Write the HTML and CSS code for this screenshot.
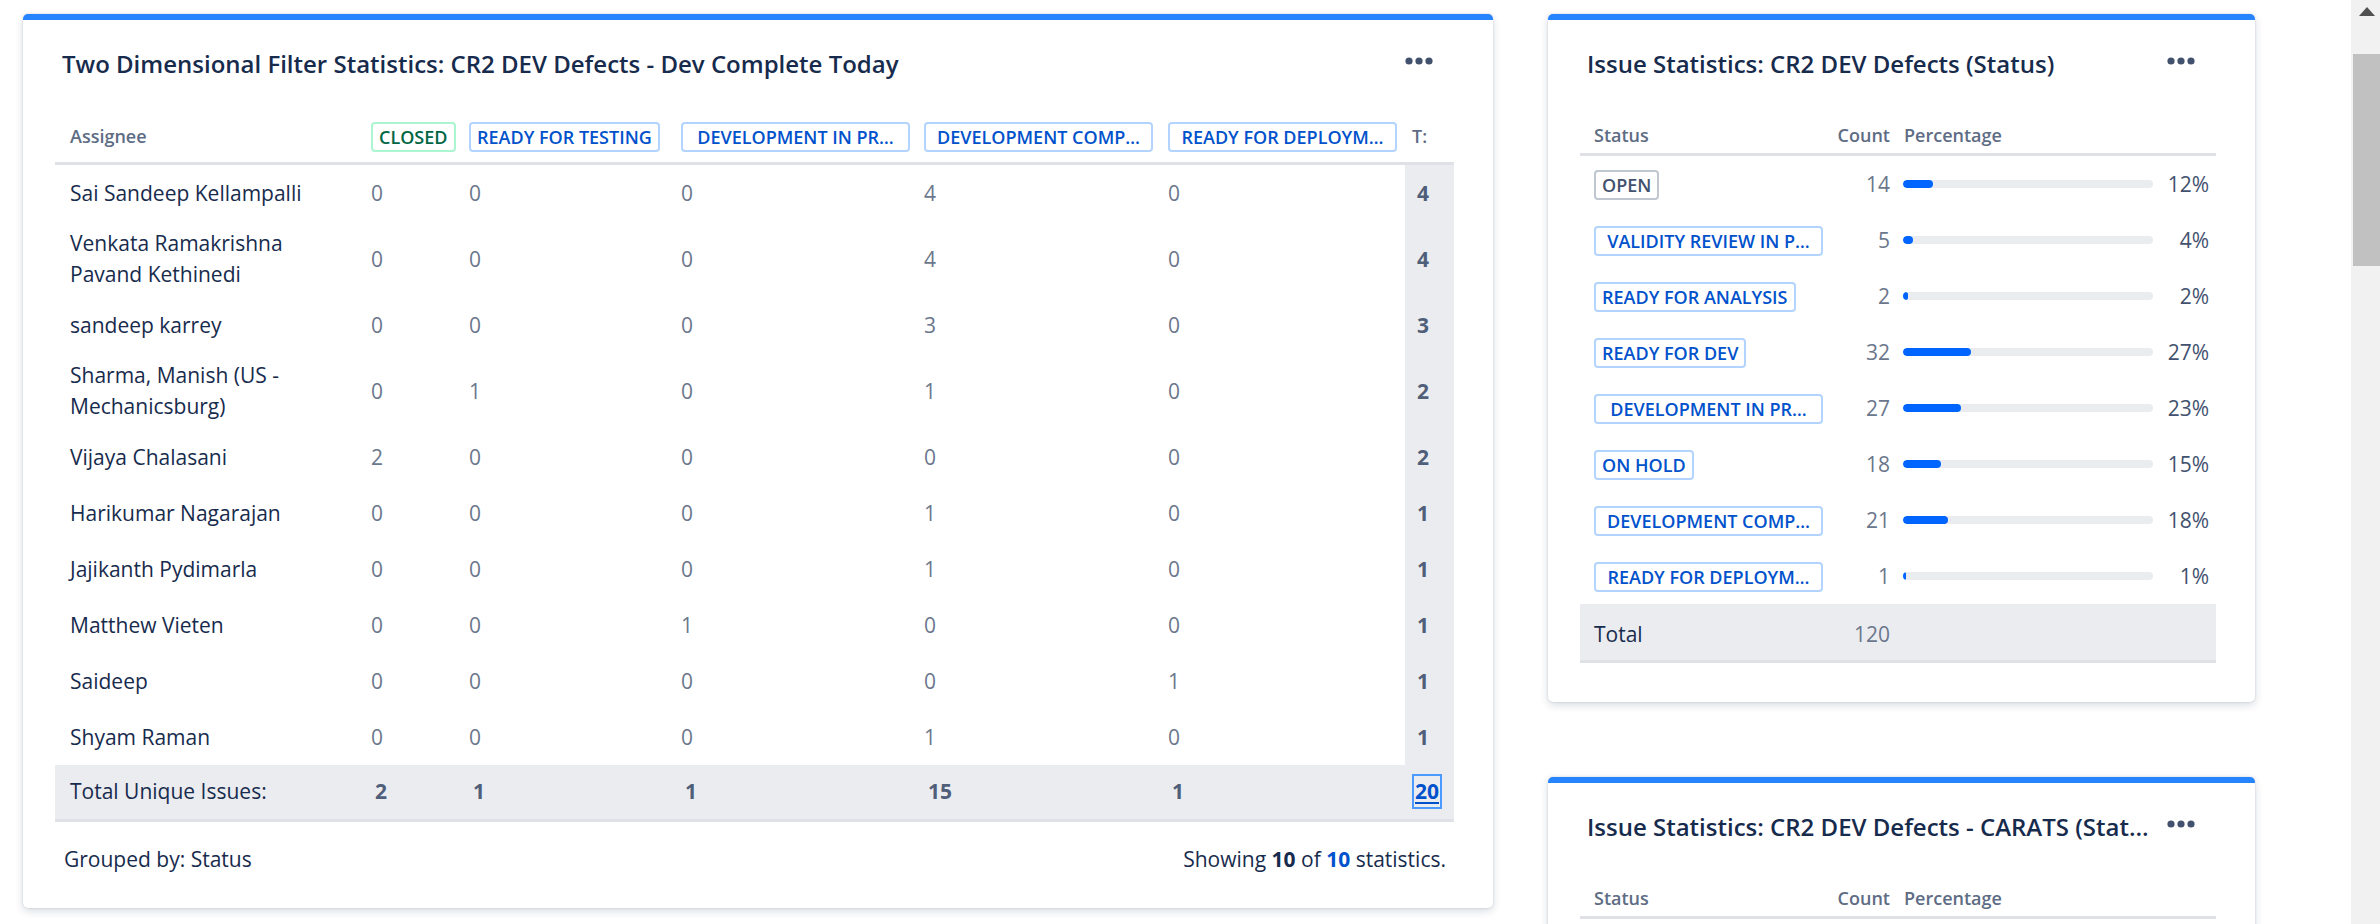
FILE: index.html
```html
<!DOCTYPE html>
<html lang="en">
<head>
<meta charset="utf-8">
<title>Dashboard</title>
<link rel="stylesheet" href="styles.css">
</head>
<body>
<div class="page">
  <div class="dashboard">
    <div class="col-left">
      <section class="gadget">
        <header class="gadget-head">
          <h2 class="gadget-title">Two Dimensional Filter Statistics: CR2 DEV Defects - Dev Complete Today</h2>
          <svg class="dots" width="28" height="8" viewBox="0 0 28 8"><circle cx="4" cy="4" r="3.6"/><circle cx="14" cy="4" r="3.6"/><circle cx="24" cy="4" r="3.6"/></svg>
        </header>
        <table class="two-d">
          <colgroup>
            <col class="w-assignee"><col class="w-c1"><col class="w-c2"><col class="w-c3"><col class="w-c4"><col class="w-c5"><col class="w-tot">
          </colgroup>
          <thead>
            <tr>
              <th class="first">Assignee</th>
              <th><span class="loz loz-green">CLOSED</span></th>
              <th><span class="loz loz-blue">READY FOR TESTING</span></th>
              <th><span class="loz loz-blue loz-trunc" title="DEVELOPMENT IN PROGRESS">DEVELOPMENT IN PR…</span></th>
              <th><span class="loz loz-blue loz-trunc" title="DEVELOPMENT COMPLETE">DEVELOPMENT COMP…</span></th>
              <th><span class="loz loz-blue loz-trunc" title="READY FOR DEPLOYMENT">READY FOR DEPLOYM…</span></th>
              <th class="tot-head">T:</th>
            </tr>
          </thead>
          <tbody>
            <tr><td class="first">Sai Sandeep Kellampalli</td><td>0</td><td>0</td><td>0</td><td>4</td><td>0</td><td class="tot">4</td></tr>
            <tr><td class="first">Venkata Ramakrishna Pavand Kethinedi</td><td>0</td><td>0</td><td>0</td><td>4</td><td>0</td><td class="tot">4</td></tr>
            <tr><td class="first">sandeep karrey</td><td>0</td><td>0</td><td>0</td><td>3</td><td>0</td><td class="tot">3</td></tr>
            <tr><td class="first">Sharma, Manish (US - Mechanicsburg)</td><td>0</td><td>1</td><td>0</td><td>1</td><td>0</td><td class="tot">2</td></tr>
            <tr><td class="first">Vijaya Chalasani</td><td>2</td><td>0</td><td>0</td><td>0</td><td>0</td><td class="tot">2</td></tr>
            <tr><td class="first">Harikumar Nagarajan</td><td>0</td><td>0</td><td>0</td><td>1</td><td>0</td><td class="tot">1</td></tr>
            <tr><td class="first">Jajikanth Pydimarla</td><td>0</td><td>0</td><td>0</td><td>1</td><td>0</td><td class="tot">1</td></tr>
            <tr><td class="first">Matthew Vieten</td><td>0</td><td>0</td><td>1</td><td>0</td><td>0</td><td class="tot">1</td></tr>
            <tr><td class="first">Saideep</td><td>0</td><td>0</td><td>0</td><td>0</td><td>1</td><td class="tot">1</td></tr>
            <tr><td class="first">Shyam Raman</td><td>0</td><td>0</td><td>0</td><td>1</td><td>0</td><td class="tot">1</td></tr>
          </tbody>
          <tfoot>
            <tr class="total-row">
              <td class="first">Total Unique Issues:</td>
              <td class="b">2</td><td class="b">1</td><td class="b">1</td><td class="b">15</td><td class="b">1</td>
              <td class="tot"><a class="grand" href="#">20</a></td>
            </tr>
          </tfoot>
        </table>
        <footer class="gadget-foot">
          <span>Grouped by: Status</span>
          <span>Showing <b>10</b> of <b class="blue">10</b> statistics.</span>
        </footer>
      </section>
    </div>

    <div class="col-right">
      <section class="gadget gadget-small">
        <header class="gadget-head">
          <h2 class="gadget-title">Issue Statistics: CR2 DEV Defects (Status)</h2>
          <svg class="dots" width="28" height="8" viewBox="0 0 28 8"><circle cx="4" cy="4" r="3.6"/><circle cx="14" cy="4" r="3.6"/><circle cx="24" cy="4" r="3.6"/></svg>
        </header>
        <table class="stats">
          <colgroup><col class="w-status"><col class="w-count"><col class="w-pct"></colgroup>
          <thead>
            <tr><th class="s-status">Status</th><th class="s-count">Count</th><th class="s-pct">Percentage</th></tr>
          </thead>
          <tbody>
            <tr><td class="s-status"><span class="loz loz-grey">OPEN</span></td><td class="s-count">14</td><td class="s-pct"><div class="barline"><div class="bar"><div class="fill" style="width:12%"></div></div><span class="pct">12%</span></div></td></tr>
            <tr><td class="s-status"><span class="loz loz-blue loz-trunc" title="VALIDITY REVIEW IN PROGRESS">VALIDITY REVIEW IN P…</span></td><td class="s-count">5</td><td class="s-pct"><div class="barline"><div class="bar"><div class="fill" style="width:4%"></div></div><span class="pct">4%</span></div></td></tr>
            <tr><td class="s-status"><span class="loz loz-blue">READY FOR ANALYSIS</span></td><td class="s-count">2</td><td class="s-pct"><div class="barline"><div class="bar"><div class="fill" style="width:2%"></div></div><span class="pct">2%</span></div></td></tr>
            <tr><td class="s-status"><span class="loz loz-blue">READY FOR DEV</span></td><td class="s-count">32</td><td class="s-pct"><div class="barline"><div class="bar"><div class="fill" style="width:27%"></div></div><span class="pct">27%</span></div></td></tr>
            <tr><td class="s-status"><span class="loz loz-blue loz-trunc" title="DEVELOPMENT IN PROGRESS">DEVELOPMENT IN PR…</span></td><td class="s-count">27</td><td class="s-pct"><div class="barline"><div class="bar"><div class="fill" style="width:23%"></div></div><span class="pct">23%</span></div></td></tr>
            <tr><td class="s-status"><span class="loz loz-blue">ON HOLD</span></td><td class="s-count">18</td><td class="s-pct"><div class="barline"><div class="bar"><div class="fill" style="width:15%"></div></div><span class="pct">15%</span></div></td></tr>
            <tr><td class="s-status"><span class="loz loz-blue loz-trunc" title="DEVELOPMENT COMPLETE">DEVELOPMENT COMP…</span></td><td class="s-count">21</td><td class="s-pct"><div class="barline"><div class="bar"><div class="fill" style="width:18%"></div></div><span class="pct">18%</span></div></td></tr>
            <tr><td class="s-status"><span class="loz loz-blue loz-trunc" title="READY FOR DEPLOYMENT">READY FOR DEPLOYM…</span></td><td class="s-count">1</td><td class="s-pct"><div class="barline"><div class="bar"><div class="fill" style="width:1%"></div></div><span class="pct">1%</span></div></td></tr>
          </tbody>
          <tfoot>
            <tr class="total-row"><td class="s-status">Total</td><td class="s-count">120</td><td class="s-pct"></td></tr>
          </tfoot>
        </table>
      </section>

      <section class="gadget gadget-small">
        <header class="gadget-head">
          <h2 class="gadget-title" title="Issue Statistics: CR2 DEV Defects - CARATS (Status)">Issue Statistics: CR2 DEV Defects - CARATS (Stat…</h2>
          <svg class="dots" width="28" height="8" viewBox="0 0 28 8"><circle cx="4" cy="4" r="3.6"/><circle cx="14" cy="4" r="3.6"/><circle cx="24" cy="4" r="3.6"/></svg>
        </header>
        <table class="stats">
          <colgroup><col class="w-status"><col class="w-count"><col class="w-pct"></colgroup>
          <thead>
            <tr><th class="s-status">Status</th><th class="s-count">Count</th><th class="s-pct">Percentage</th></tr>
          </thead>
          <tbody>
            <tr class="empty-row"><td></td><td></td><td></td></tr>
          </tbody>
        </table>
      </section>
    </div>
  </div>

  <div class="scrollbar">
    <div class="sb-up"><span class="sb-arrow"></span></div>
    <div class="sb-thumb"></div>
  </div>
</div>
</body>
</html>
```

FILE: styles.css
```css
html, body {
  margin: 0;
  padding: 0;
}
body {
  width: 2380px;
  height: 924px;
  overflow: hidden;
  background: #ffffff;
  font-family: "Open Sans", "Noto Sans", sans-serif;
  font-size: 21px;
  color: #172b4d;
}
.page {
  display: flex;
  height: 924px;
}
.dashboard {
  flex: 1;
  display: flex;
  align-items: flex-start;
  gap: 55px;
  padding: 14px 0 0 23px;
}
.col-left {
  width: 1470px;
  flex: none;
}
.col-right {
  width: 707px;
  flex: none;
  display: flex;
  flex-direction: column;
  gap: 75px;
}

/* gadget card */
.gadget {
  background: #ffffff;
  border-top: 6px solid #2684ff;
  border-radius: 5px;
  box-shadow: 0 3px 8px rgba(9, 30, 66, 0.16), 0 0 2px rgba(9, 30, 66, 0.18);
  padding: 0 39px 33px 32px;
}
.gadget-small {
  padding-bottom: 39px;
}
.gadget-head {
  display: flex;
  align-items: center;
  gap: 17px;
  padding: 28px 21px 0 7px;
}
.gadget-title {
  margin: 0;
  flex: 1;
  min-width: 0;
  font-size: 24px;
  line-height: 32px;
  font-weight: 600;
  color: #172b4d;
  white-space: nowrap;
}
.dots {
  flex: none;
  fill: #42526e;
  margin-top: -6px;
}

/* lozenges */
.loz {
  display: inline-block;
  box-sizing: border-box;
  height: 30px;
  padding: 0 6px;
  border: 2px solid;
  border-radius: 4px;
  font-size: 18px;
  line-height: 26px;
  font-weight: 600;
  white-space: nowrap;
  vertical-align: middle;
}
.loz-trunc {
  width: 229px;
  padding: 0 4px;
  text-align: center;
}
.loz-green {
  border-color: #abf5d1;
  color: #006644;
}
.loz-blue {
  border-color: #b3d4ff;
  color: #0052cc;
}
.loz-grey {
  border-color: #c1c7d0;
  color: #42526e;
}

/* two dimensional table */
table {
  border-collapse: separate;
  border-spacing: 0;
  table-layout: fixed;
  width: 100%;
  margin-top: 30px;
}
.w-assignee { width: 304px; }
.w-c1 { width: 98px; }
.w-c2 { width: 212px; }
.w-c3 { width: 243px; }
.w-c4 { width: 244px; }
.w-c5 { width: 249px; }
.w-tot { width: 49px; }

.two-d th {
  text-align: left;
  padding: 10px 0 10px 12px;
  border-bottom: 3px solid #dfe1e6;
  font-size: 18px;
  line-height: 30px;
  font-weight: 600;
  color: #5e6c84;
  vertical-align: middle;
  white-space: nowrap;
}
.two-d th.first,
.two-d td.first {
  padding-left: 15px;
}
.two-d th.tot-head {
  padding-left: 7px;
}
.two-d tbody tr {
  height: 56px;
}
.two-d td {
  padding: 7px 12px;
  line-height: 31px;
  color: #6b778c;
  vertical-align: middle;
}
.two-d td.first {
  color: #172b4d;
  padding-right: 12px;
}
.two-d td.tot {
  background: #ebecf0;
  font-weight: 700;
  color: #505f79;
  padding-left: 12px;
  padding-right: 0;
}
.two-d .total-row td {
  background: #ebecf0;
  padding-top: 11px;
  padding-bottom: 12px;
  border-bottom: 3px solid #dfe1e6;
}
.two-d .total-row td.first {
  color: #172b4d;
}
.two-d .total-row td.b {
  font-weight: 700;
  color: #505f79;
  padding-left: 16px;
}
.grand {
  display: inline-block;
  margin-left: -3px;
  padding: 2px 1px;
  line-height: 27px;
  color: #0052cc;
  font-weight: 700;
  text-decoration: underline;
  text-decoration-thickness: 2px;
  text-underline-offset: 3px;
  outline: 2px solid #4c9aff;
}

.gadget-foot {
  display: flex;
  justify-content: space-between;
  padding: 22px 8px 0 9px;
  line-height: 31px;
  color: #172b4d;
}
.gadget-foot b {
  font-weight: 700;
}
.gadget-foot .blue {
  color: #0052cc;
}

/* issue statistics table */
.w-status { width: 246px; }
.w-count { width: 71px; }
.w-pct { width: 319px; }

.stats th {
  padding: 13px 0 5px;
  border-bottom: 3px solid #dfe1e6;
  font-size: 18px;
  line-height: 25px;
  font-weight: 600;
  color: #5e6c84;
  text-align: left;
  white-space: nowrap;
}
.stats tbody tr {
  height: 56px;
}
.stats td {
  padding: 0;
  line-height: 31px;
  vertical-align: middle;
  color: #6b778c;
}
.stats .s-status {
  padding-left: 14px;
}
.stats .s-count {
  text-align: right;
  padding-right: 7px;
}
.stats .s-pct {
  padding-left: 6px;
  padding-right: 7px;
}
.stats th.s-pct {
  padding-left: 7px;
}
.barline {
  display: flex;
  align-items: center;
}
.bar {
  width: 250px;
  height: 8px;
  border-radius: 4px;
  background: #ebecf0;
  overflow: hidden;
}
.fill {
  height: 8px;
  border-radius: 4px;
  background: #0065ff;
}
.pct {
  margin-left: auto;
  color: #42526e;
}
.stats .total-row td {
  height: 59px;
  padding-top: 5px;
  background: #ebecf0;
  border-bottom: 3px solid #dfe1e6;
  box-sizing: border-box;
}
.stats .total-row td.s-status {
  color: #172b4d;
}

/* fake page scrollbar */
.scrollbar {
  width: 29px;
  flex: none;
  background: #f1f1f1;
  display: flex;
  flex-direction: column;
  align-items: flex-end;
}
.sb-up {
  width: 27px;
  height: 27px;
  display: flex;
  align-items: center;
  justify-content: center;
  margin-bottom: 27px;
}
.sb-arrow {
  width: 0;
  height: 0;
  border-left: 8px solid transparent;
  border-right: 8px solid transparent;
  border-bottom: 9px solid #505050;
  margin-top: -5px;
}
.sb-thumb {
  width: 27px;
  height: 212px;
  background: #c1c1c1;
}
```
